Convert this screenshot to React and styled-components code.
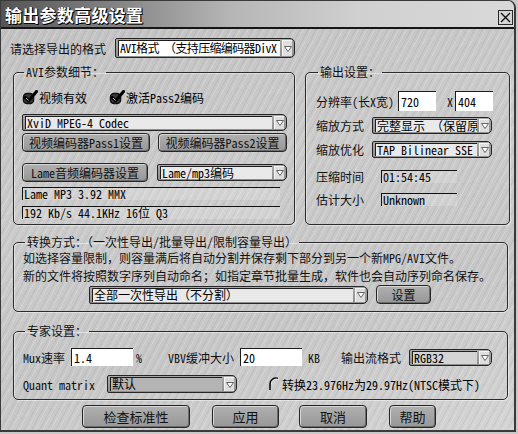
import React from "react";
import styled, { createGlobalStyle, css } from "styled-components";

const FONT = `"Noto Sans Mono CJK SC", "Noto Sans CJK SC", monospace`;

const GlobalStyle = createGlobalStyle`
  html, body {
    margin: 0;
    padding: 0;
    background: #c9c9c9;
  }
  body {
    font-family: ${FONT};
    font-size: 12px;
    color: #000;
  }
  * {
    box-sizing: border-box;
  }
`;

const metal = css`
  background:
    repeating-linear-gradient(
      118deg,
      rgba(255, 255, 255, 0.18) 0 1px,
      transparent 1px 4px,
      rgba(0, 0, 0, 0.05) 4px 5px,
      transparent 5px 7px
    ),
    linear-gradient(165deg, #c1c1c1 0%, #cbcbcb 40%, #c7c7c7 70%, #d4d4d4 100%);
`;

const Window = styled.div`
  width: 516px;
  height: 432px;
  ${metal}
  border: 1px solid #3a3a3a;
  border-right-width: 2px;
  border-bottom-width: 2px;
  border-top-right-radius: 8px;
  overflow: hidden;
  display: flex;
  flex-direction: column;
`;

const TitleBar = styled.div`
  height: 28px;
  flex-shrink: 0;
  display: flex;
  align-items: center;
  justify-content: space-between;
  padding: 0 1px 0 4px;
  background: linear-gradient(
    to right,
    #545454 0%,
    #838383 22%,
    #b6b6b6 45%,
    #d0d0d0 70%,
    #d9d9d9 100%
  );
  border-bottom: 2px solid #161616;
`;

const Title = styled.h1`
  margin: 0;
  font-family: "Noto Sans CJK SC", sans-serif;
  font-size: 17px;
  font-weight: bold;
  color: #fff;
  letter-spacing: 0.3px;
  text-shadow: 1px 1px 0 #000, 1px 0 0 #222, 0 1px 0 #222;
`;

const CloseButton = styled.div`
  align-self: flex-end;
  margin-bottom: 2px;
  width: 15px;
  height: 15px;
  border: 1px solid #2a2a2a;
  background: #d6d6d6;
  display: flex;
  align-items: center;
  justify-content: center;
`;

const Body = styled.div`
  padding: 9px 0 0 12px;
  display: flex;
  flex-direction: column;
`;

const Row = styled.div`
  display: flex;
  align-items: center;
  margin-top: ${(p) => p.$mt || 0}px;
  margin-left: ${(p) => p.$ml || 0}px;
  gap: ${(p) => p.$gap || 0}px;
`;

const Label = styled.span`
  flex-shrink: 0;
  white-space: nowrap;
  width: ${(p) => (p.$w ? `${p.$w}px` : "auto")};
  margin-left: ${(p) => p.$ml || 0}px;
  font-size: 12px;
  color: #111;
`;

const Columns = styled.div`
  display: flex;
  gap: 10px;
  margin-top: 7px;
`;

const Group = styled.fieldset`
  margin: 0;
  margin-top: ${(p) => p.$mt || 0}px;
  width: ${(p) => p.$w}px;
  height: ${(p) => p.$h}px;
  min-width: 0;
  padding: 0 ${(p) => p.$pr || 7}px 0 ${(p) => p.$pl || 8}px;
  border: 1px solid #2b2b2b;
  border-radius: 5px;
  box-shadow: inset 1px 1px 0 rgba(255, 255, 255, 0.45), 1px 1px 0 rgba(255, 255, 255, 0.45);
  display: flex;
  flex-direction: column;
`;

const Legend = styled.legend`
  margin-left: 2px;
  padding: 0 2px;
  font-size: 12px;
  line-height: 14px;
  color: #111;
  white-space: nowrap;
`;

const Check = styled.label`
  display: flex;
  align-items: center;
  gap: 1px;
  width: ${(p) => (p.$w ? `${p.$w}px` : "auto")};
  margin-left: ${(p) => p.$ml || 0}px;
  white-space: nowrap;
  font-size: 12px;
`;

const SelectBox = styled.div`
  display: flex;
  flex-shrink: 0;
  width: ${(p) => p.$w}px;
  height: ${(p) => p.$h || 17}px;
  margin-left: ${(p) => p.$ml || 0}px;
  border: 1px solid #262626;
  border-radius: 2px 5px 5px 2px;
  background: linear-gradient(#a9a9a9, #8e8e8e);
  padding: 1px 2px;
  gap: 2px;
`;

const SelectField = styled.div`
  flex: 1;
  min-width: 0;
  background: ${(p) => p.$bg || "#e9e9e9"};
  box-shadow: inset 1px 1px 0 #1e1e1e;
  padding: 0 0 0 2px;
  font-size: 12px;
  letter-spacing: ${(p) => p.$ls || 0}px;
  line-height: ${(p) => (p.$h || 17) - 4}px;
  white-space: nowrap;
  overflow-x: clip;
  overflow-y: visible;
  color: #000;
`;

const SelectArrow = styled.div`
  width: 10px;
  flex-shrink: 0;
  background: #dedede;
  border-top: 1px solid #f4f4f4;
  border-left: 1px solid #f4f4f4;
  display: flex;
  align-items: center;
  justify-content: center;
`;

const Button = styled.button`
  flex-shrink: 0;
  width: ${(p) => p.$w}px;
  height: ${(p) => p.$h || 19}px;
  margin-left: ${(p) => p.$ml || 0}px;
  padding: 0;
  border: 1px solid #262626;
  border-radius: 4px;
  background: linear-gradient(to bottom, #b0b0b0, #979797);
  box-shadow: inset 1px 1px 0 #d6d6d6, inset -1px -1px 0 #6c6c6c;
  font-family: ${FONT};
  font-size: ${(p) => p.$size || 12}px;
  color: #111;
  white-space: nowrap;
`;

const TextInput = styled.input`
  flex-shrink: 0;
  width: ${(p) => p.$w}px;
  height: ${(p) => p.$h || 19}px;
  margin-left: ${(p) => p.$ml || 0}px;
  padding: 0 0 0 2px;
  border: none;
  border-top: 1px solid #1e1e1e;
  border-left: 1px solid #1e1e1e;
  background: #fff;
  font-family: ${FONT};
  font-size: 12px;
  color: #000;
  outline: none;
`;

const Display = styled.div`
  flex-shrink: 0;
  width: ${(p) => p.$w}px;
  height: 13px;
  margin-top: ${(p) => p.$mt || 0}px;
  margin-left: ${(p) => p.$ml || 0}px;
  border-top: 1px solid #111;
  border-left: 1px solid #111;
  background: rgba(255, 255, 255, 0.18);
  padding-left: 1px;
  font-size: 12px;
  line-height: 12px;
  white-space: nowrap;
  overflow-x: clip;
  overflow-y: visible;
`;

const Note = styled.p`
  margin: 0;
  font-size: 12px;
  line-height: 18px;
  white-space: nowrap;
  color: #111;
`;

const Footer = styled.div`
  display: flex;
  margin-top: 5px;
  margin-left: 69px;
`;

const CheckIcon = () => (
  <svg width="16" height="15" viewBox="0 0 16 15">
    <rect x="1.5" y="3.5" width="10" height="10" rx="3.5" fill="#3a3a3a" stroke="#111" strokeWidth="1.5" />
    <path
      d="M3.5 7.5 L6.5 11 L14.5 1.5"
      fill="none"
      stroke="#000"
      strokeWidth="3"
      strokeLinecap="round"
      strokeLinejoin="round"
    />
    <path d="M4 8 L6.5 10.5" stroke="#fff" strokeWidth="0.8" fill="none" />
  </svg>
);

const RadioIcon = () => (
  <svg width="14" height="16" viewBox="0 0 14 16">
    <path d="M11 2.5 A6 6 0 0 0 3 8 L3 14" fill="none" stroke="#111" strokeWidth="1.6" />
    <path d="M11.5 3.5 A5 5 0 0 0 4.5 8" fill="none" stroke="#fff" strokeWidth="0.8" />
  </svg>
);

const ArrowIcon = () => (
  <svg width="8" height="6" viewBox="0 0 8 6">
    <path d="M0.5 0.5 H7.5 L4 5.5 Z" fill="#fff" stroke="#666" strokeWidth="1" />
  </svg>
);

const Select = ({ w, h, ml, bg, ls, children }) => (
  <SelectBox $w={w} $h={h} $ml={ml}>
    <SelectField $bg={bg} $h={h} $ls={ls}>
      {children}
    </SelectField>
    <SelectArrow>
      <ArrowIcon />
    </SelectArrow>
  </SelectBox>
);

const App = () => {
  return (
    <>
      <GlobalStyle />
      <Window>
        <TitleBar>
          <Title>输出参数高级设置</Title>
          <CloseButton>
            <svg width="11" height="11" viewBox="0 0 11 11">
              <path d="M1 1 L10 10 M10 1 L1 10" stroke="#111" strokeWidth="1.4" />
            </svg>
          </CloseButton>
        </TitleBar>

        <Body>
          <Row $ml={-3}>
            <Label $w={105}>请选择导出的格式</Label>
            <Select w={180} h={20} bg="#fff" ls={-0.65}>
              AVI格式 （支持压缩编码器DivX
            </Select>
          </Row>

          <Columns>
            <Group $w={282} $h={160}>
              <Legend>AVI参数细节：</Legend>
              <Row $mt={10}>
                <Check $w={87}>
                  <CheckIcon />
                  视频有效
                </Check>
                <Check>
                  <CheckIcon />
                  激活Pass2编码
                </Check>
              </Row>
              <Row $mt={8}>
                <Select w={265}>XviD MPEG-4 Codec</Select>
              </Row>
              <Row $mt={2} $gap={8}>
                <Button $w={128}>视频编码器Pass1设置</Button>
                <Button $w={129}>视频编码器Pass2设置</Button>
              </Row>
              <Row $mt={11}>
                <Button $w={126}>Lame音频编码器设置</Button>
                <Select w={130} ml={9}>
                  Lame/mp3编码
                </Select>
              </Row>
              <Display $w={258} $mt={5}>
                Lame MP3 3.92 MMX
              </Display>
              <Display $w={258} $mt={6}>
                192 Kb/s 44.1KHz 16位 Q3
              </Display>
            </Group>

            <Group $w={205} $h={160} $pl={10}>
              <Legend>输出设置：</Legend>
              <Row $mt={12}>
                <Label $w={82}>分辨率(长X宽)</Label>
                <TextInput $w={38} $h={20} defaultValue="720" readOnly />
                <Label $ml={11}>X</Label>
                <TextInput $w={38} $h={20} $ml={2} defaultValue="404" readOnly />
              </Row>
              <Row $mt={6}>
                <Label $w={56}>缩放方式</Label>
                <Select w={120}>完整显示 （保留原比例）</Select>
              </Row>
              <Row $mt={7}>
                <Label $w={56}>缩放优化</Label>
                <Select w={120}>TAP Bilinear SSE</Select>
              </Row>
              <Row $mt={10}>
                <Label $w={65}>压缩时间</Label>
                <Display $w={76}>01:54:45</Display>
              </Row>
              <Row $mt={6}>
                <Label $w={65}>估计大小</Label>
                <Display $w={76}>Unknown</Display>
              </Row>
            </Group>
          </Columns>

          <Group $w={495} $h={77} $mt={10} $pl={9}>
            <Legend>转换方式：（一次性导出/批量导出/限制容量导出）</Legend>
            <Note>如选择容量限制，则容量满后将自动分割并保存剩下部分到另一个新MPG/AVI文件。</Note>
            <Note>新的文件将按照数字序列自动命名；如指定章节批量生成，软件也会自动序列命名保存。</Note>
            <Row>
              <Select w={279} h={18} ml={66}>
                全部一次性导出（不分割）
              </Select>
              <Button $w={55} $ml={8}>
                设置
              </Button>
            </Row>
          </Group>

          <Group $w={495} $h={76} $mt={12} $pl={9}>
            <Legend>专家设置：</Legend>
            <Row $mt={10}>
              <Label $w={48}>Mux速率</Label>
              <TextInput $w={62} $h={18} defaultValue="1.4" readOnly />
              <Label $ml={3}>%</Label>
              <Label $ml={26}>VBV缓冲大小</Label>
              <TextInput $w={62} $h={18} $ml={6} defaultValue="20" readOnly />
              <Label $ml={6}>KB</Label>
              <Label $ml={21}>输出流格式</Label>
              <Select w={83} ml={8} bg="#d4d4d4">
                RGB32
              </Select>
            </Row>
            <Row $mt={9}>
              <Label $w={84}>Quant matrix</Label>
              <Select w={130} h={18} bg="#b4b4b4">
                默认
              </Select>
              <Check $ml={30}>
                <RadioIcon />
                转换23.976Hz为29.97Hz(NTSC模式下)
              </Check>
            </Row>
          </Group>

          <Footer>
            <Button $w={108} $h={23} $size={13}>
              检查标准性
            </Button>
            <Button $w={67} $h={23} $ml={22} $size={13}>
              应用
            </Button>
            <Button $w={68} $h={23} $ml={20} $size={13}>
              取消
            </Button>
            <Button $w={47} $h={23} $ml={22} $size={13}>
              帮助
            </Button>
          </Footer>
        </Body>
      </Window>
    </>
  );
};

export default App;
